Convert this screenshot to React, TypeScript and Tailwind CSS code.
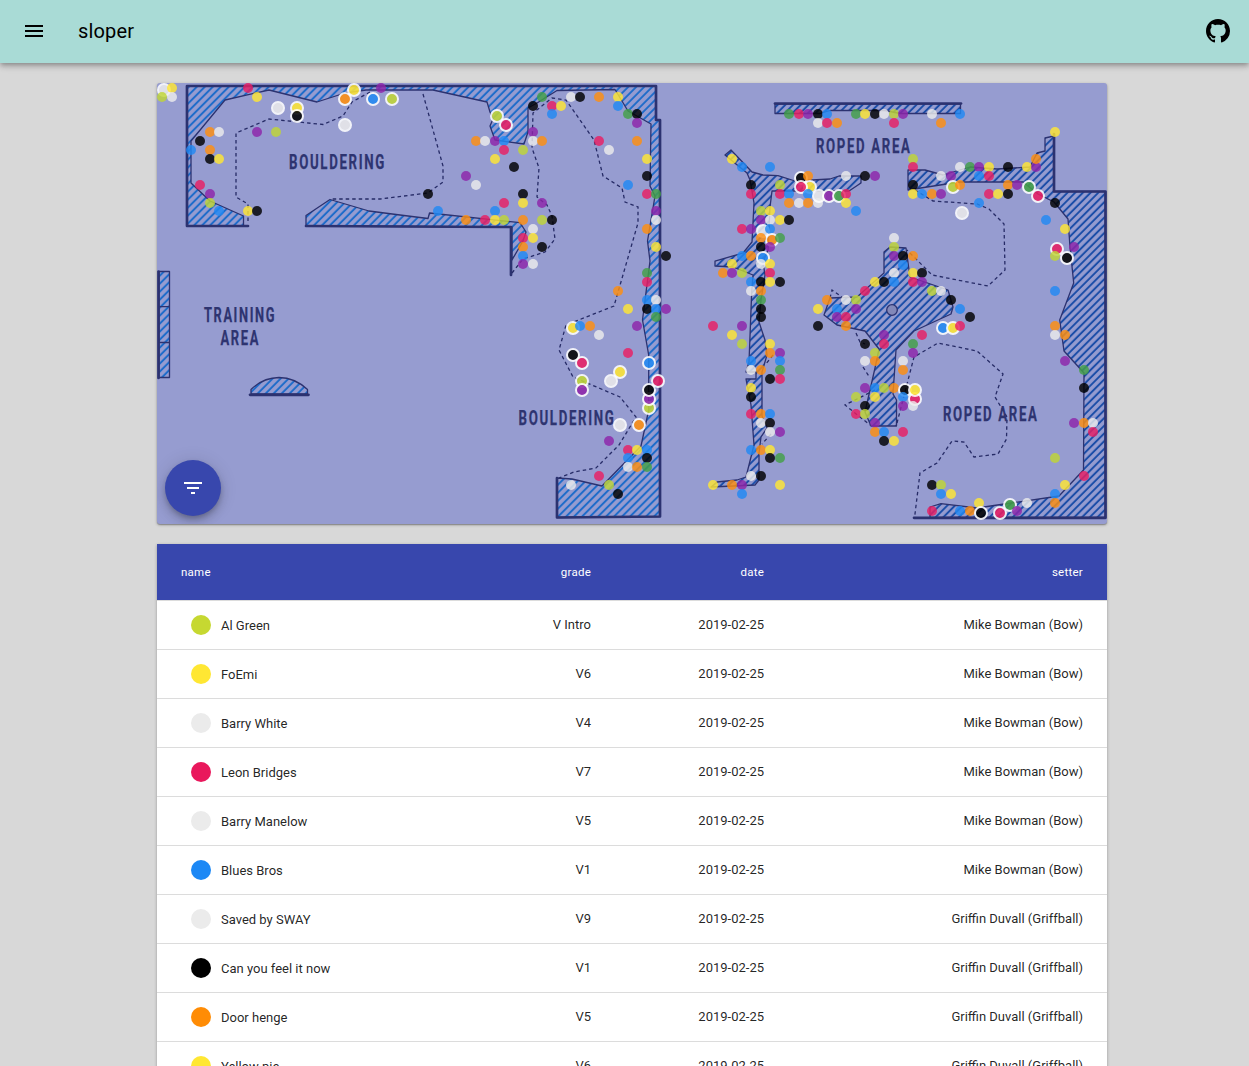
import React from "react";

const COLORS: Record<string, string> = {
  r: "#e91e63",
  p: "#8e24aa",
  b: "#2189f3",
  g: "#43a047",
  l: "#c0d636",
  y: "#ffe633",
  o: "#ff8f0f",
  k: "#000000",
  w: "#ebebeb",
};

// Each entry is a colour key followed by its x,y position; capitals are selected routes.
const DOTS = `
W164,90 y172,88 l162,97 w172,97 r248,88 y257,97 p381,88 W278,108 Y297,108 K297,116 O345,99 Y354,90 B373,99 L392,99 W345,125
o210,132 w219,132 k200,141 b191,150 o210,150 k210,159 y219,159 p257,132 l276,132 r200,185 p210,194 l210,203 b219,211 y248,211 k257,211
g542,97 k533,106 r552,106 y561,106 b552,114 w571,97 k580,97 o599,97 y618,97 b618,106 g628,114 k637,114 p637,123 L497,116 R506,125
o476,141 w485,141 p495,141 b504,141 r504,150 y495,159 l523,150 k514,167 p533,132 w533,141 o542,141 p466,176 w476,185 k428,194 b438,211
r599,141 w609,150 o637,141 y647,159 k647,176 b628,185 r647,194 g656,194 p656,211 w656,220 o647,229 y656,247 k666,256 g647,273 r647,282 o618,291
k523,194 y523,203 r504,203 b495,211 p542,203 o466,220 r485,220 y495,220 l504,220 o523,220 l542,220 k552,220 w533,229 r523,238 y533,238
o523,247 k542,247 b523,256 p523,264 w533,264
b647,300 w656,300 k647,309 b656,309 p666,309 g656,317 y628,309 p637,326 Y573,328 b580,326 o590,326 w599,335 K573,355 R582,363 r628,353
B649,363 W611,381 Y620,372 R658,381 L582,381 P582,390 L649,408 P649,399 K649,390 W620,425 O639,425 p609,441
r628,450 y637,450 b647,450 b628,458 k647,458 w628,467 o637,467 g647,467 r599,476 w571,485 l609,485 k618,494
g789,114 r799,114 p808,114 k818,114 b827,114 g856,114 y865,114 k875,114 w884,114 l894,114 p903,114 w932,114 b960,114
w818,123 r827,123 o837,123 r894,123 o941,123 y732,159 b742,167 b770,167 k751,185 r751,194 l780,185 r780,194 b789,194
K801,178 o808,176 Y810,187 R801,187 w846,176 k865,176 p875,176 b808,194 o789,203 w799,203 o808,203 w818,203 W819,196 P829,196 G839,196 r846,194 y846,203 b856,211
l761,211 y770,211 p761,220 w770,220 y780,220 k789,220 r742,229 p751,229 W763,231 b770,229 O772,240 o761,238 g780,238 k761,247 p770,247
b742,256 o751,256 B763,258 w761,264 y732,264 y770,264 o723,273 p732,273 l742,273 r770,273 b751,282 k761,282 y770,282 k780,282 w751,291 o761,291 g761,300
k761,309 k761,317 r713,326 p742,326 y732,335 l742,344 y770,344 o770,353 p780,353 b751,361 b780,361 w751,370 o761,370 g780,370 k770,379 r780,379
y751,388 k751,397 r751,414 o761,414 b770,414 w761,423 k770,423 w770,432 p780,432 b751,450 o761,450 y770,450 k770,458 g780,458 w751,476 k761,476
y713,485 o732,485 p742,485 y780,485 b742,494
o827,300 y818,309 k818,326 b837,309 w846,300 l856,300 p856,309 p837,317 r846,317 o846,326 r865,291 k865,344 p884,335 r884,344 l875,353
w865,361 o875,361 p865,388 b875,388 l884,388 l856,397 y875,397 k865,406 r856,414 l865,414 p875,423 o875,432 b884,432 k884,441 y894,441
y1055,132 l913,159 r913,167 w941,176 p951,176 w960,167 g970,167 p979,167 y989,167 k1008,167 y1027,167 p1036,167 o1036,159 b979,176 r989,176
k913,185 y913,194 b922,194 o932,194 p941,194 L953,187 o960,185 o1008,185 p1017,185 G1029,187 R1038,196 r989,194 y998,194 k1008,194 b979,203 W962,213
k1055,203 b1046,220 y1065,229 p1074,247 R1057,249 l1055,256 K1067,258 b1055,291
w894,238 l894,247 p894,256 k903,256 o913,256 b903,265 w894,273 y913,273 k922,273 y875,282 k884,282 b894,282 r913,282 p922,282 l932,291 w941,291 k951,300
b960,309 k970,317 B943,328 Y953,328 r960,326 r922,335 g913,344 p913,353 w903,361 o903,370 o894,388 K905,390 R915,399 Y915,390 b903,397 p903,406 w913,406 r903,432
o1055,326 w1055,335 o1065,335 p1065,361 g1084,370 k1084,388 p1074,423 o1084,423 w1093,423 r1093,432 l1055,458 r1084,476 y1065,485 b1055,494 o1055,503
k932,485 l941,485 b941,494 y951,494 r932,511 b960,511 o970,511 y979,503 K981,513 R1000,513 G1010,505 p1017,511 w1027,503
`
  .trim()
  .split(/\s+/)
  .map((entry) => {
    const [x, y] = entry.slice(1).split(",").map(Number);
    const key = entry[0].toLowerCase();
    return { x, y, color: COLORS[key], selected: entry[0] !== key };
  });

const DASHED = [
  "M370 92L352 102L343 116L323 124.5L269 119L236 133V197L248 204V222",
  "M423 94L443 166V182L428 193L380 199H330",
  "M512 273L523 259L545 252L555 239L552 216L547 205L537 197L539 168L532 148L533 113L552 98L566 100L594 140L603 176L622 188L625 202L638 207V223L614 306L566 325L559 350L573 377L620 397L636 417L619 445L596 468L574 472L559 478",
  "M915 190L933 201L977 204L989 209L1004 224L1005 270L988 286L932 275L907 250",
  "M897 423L914 357L938 343L977 351L1003 374L995 397L1007 417L1006.5 439L998 454L974 457L964 442L952 441L937 463L920 473L914.5 518",
  "M830 298L832 290L842 297",
  "M856 333L860 342L865 344M863 367L870 378M875 390L845 405L870 425",
  "M773 355L765 365M771 434L762 444",
];

const LIGHT_WALLS = [
  "M187 86V226H243.500V216L210 201L191 183V141L225 100L269 90L317 102L345 93L366 90H433L487 102L490 112L493 119L490 126L495 140L524 144L528 132V108L537 103L557 90.500L615 89.500L628 111L651 124L650 186L655 196L647.500 241L650 261L642.500 320L648.700 355V410L641 446L602 486L572 479L557 478V517.500L660 516.500V120H656V86Z",
  "M306 226V215.500L330 199.500L369 211L400 215L428 218.500L429.500 213L520 222.700L526 232L523 241L512 260V227Z",
  "M159 271.500H169.500V377.500H159ZM159 306.700H169.500M159 342.500H169.500",
  "M251 394V389.500Q263 377.700 279 377.500Q295 377.700 307.500 389.500V394Z",
];

const DARK_WALLS = [
  "M775 104V113.500H820L830 110.500H885L900 113.500H960.500V104Z",
  "M725 155L731 150L752 172L763 175L778 175.700L795 181L830 179L839 176H861V183L849 191H772L770 207L768 250L763 262L765 275L761 300L759 322L765 340L767 355L762 372V416L767 428L761 437L759 453V480L755 485L711 487L717 482L737 480L746 477L754 445L751 405L746 379H756V372H746L749 362L751.700 292L753 275L733 267L715 266V261L743 253L752 242L754 203L750 180L747 173Z",
  "M884 273V252L890 247L906 248L910 277L948 290L953 307L951 314L914 331L896 350L893 394L896.500 400V426H871L865 412L875 368L879 349L865 331L837 325L824 315L830 298L857 297Z",
  "M908 190V170H925L943 175L970 167L997 169L1030 167L1037 153L1045 151V138L1054 136V191.500H1105.500V517.500H930V507L941 503.700L977 508L1059 496L1083.500 470L1084 373L1064 351L1059.700 320L1073.700 283L1070 247L1068 219L1054 202L1038 194L1023 182H960L940 185Z",
];

const THICK = [
  "M248 226H187V86H656V120H660V516.500L557 517.500V478",
  "M306 226L511 227V275",
  "M158.500 271.500V378",
  "M250 394.800H308.500",
  "M775 103.500H961",
  "M1054 134V191.500H1105.500V517.800H914",
];

function MapLabel({ x, y, width, children }: { x: number; y: number; width: number; children: string }) {
  return (
    <text
      x={x}
      y={y}
      textLength={width}
      lengthAdjust="spacingAndGlyphs"
      className="fill-[#2e3470] stroke-[#2e3470] stroke-[0.25px] text-[20px] font-bold tracking-[2.5px]"
    >
      {children}
    </text>
  );
}

function GymMap() {
  return (
    <svg viewBox="157 83 950 441" className="block h-full w-full">
      <defs>
        <pattern id="lightHatch" width="5.650" height="5.650" patternUnits="userSpaceOnUse" patternTransform="rotate(45)">
          <path d="M2.800 -1V7" stroke="#1f6cca" strokeWidth="2" />
        </pattern>
        <pattern id="darkHatch" width="5.450" height="5.450" patternUnits="userSpaceOnUse" patternTransform="rotate(45)">
          <path d="M2.700 -1V7" stroke="#1b4da8" strokeWidth="2" />
        </pattern>
      </defs>
      <g stroke="#2c3270" strokeWidth="1.300" strokeLinejoin="round">
        {LIGHT_WALLS.map((d) => (
          <path key={d} d={d} fill="url(#lightHatch)" />
        ))}
        {DARK_WALLS.map((d) => (
          <path key={d} d={d} fill="url(#darkHatch)" />
        ))}
        <circle cx="892" cy="310" r="5.300" fill="#8288b9" />
      </g>
      <g fill="none" stroke="#2c3270" strokeWidth="2.700" strokeLinecap="round" strokeLinejoin="round">
        {THICK.map((d) => (
          <path key={d} d={d} />
        ))}
      </g>
      <g fill="none" stroke="#262b66" strokeWidth="1.300" strokeDasharray="3.500 3">
        {DASHED.map((d) => (
          <path key={d} d={d} />
        ))}
      </g>
      <MapLabel x={289} y={169.300} width={97}>BOULDERING</MapLabel>
      <MapLabel x={518.500} y={425.300} width={97}>BOULDERING</MapLabel>
      <MapLabel x={204} y={322.300} width={72}>TRAINING</MapLabel>
      <MapLabel x={220.500} y={345.300} width={39.500}>AREA</MapLabel>
      <MapLabel x={816} y={152.800} width={95.500}>ROPED AREA</MapLabel>
      <MapLabel x={943} y={421.300} width={95.500}>ROPED AREA</MapLabel>
      {DOTS.map(({ x, y, color, selected }, i) => (
        <circle
          key={i}
          cx={x}
          cy={y}
          r={selected ? 6 : 5}
          fill={color}
          opacity={selected ? 0.87 : 0.82}
          stroke={selected ? "#ffffff" : "none"}
          strokeWidth="2"
        />
      ))}
    </svg>
  );
}

const ROWS = [
  ["#c6d831", "Al Green", "V Intro", "Mike Bowman (Bow)"],
  ["#ffe733", "FoEmi", "V6", "Mike Bowman (Bow)"],
  ["#ebebeb", "Barry White", "V4", "Mike Bowman (Bow)"],
  ["#e9185c", "Leon Bridges", "V7", "Mike Bowman (Bow)"],
  ["#ebebeb", "Barry Manelow", "V5", "Mike Bowman (Bow)"],
  ["#1c88f5", "Blues Bros", "V1", "Mike Bowman (Bow)"],
  ["#ebebeb", "Saved by SWAY", "V9", "Griffin Duvall (Griffball)"],
  ["#000000", "Can you feel it now", "V1", "Griffin Duvall (Griffball)"],
  ["#ff8c05", "Door henge", "V5", "Griffin Duvall (Griffball)"],
  ["#ffe733", "Yellow pie", "V6", "Griffin Duvall (Griffball)"],
];

export default function App() {
  return (
    <div className="h-screen overflow-hidden bg-[#d8d8d8] font-[Roboto,sans-serif]">
      <header className="relative flex h-[63px] items-center bg-[#a9dbd6] px-[22px] pb-0.5 shadow-[0_2px_4px_-1px_rgba(0,0,0,0.2),0_4px_5px_rgba(0,0,0,0.14),0_1px_10px_rgba(0,0,0,0.12)]">
        <button aria-label="Menu">
          <svg viewBox="0 0 24 24" className="size-6">
            <path d="M3 18h18v-2H3v2zm0-5h18v-2H3v2zm0-7v2h18V6H3z" />
          </svg>
        </button>
        <h1 className="ml-8 grow text-[20px] leading-8 tracking-[0.15px] text-black">sloper</h1>
        <svg viewBox="0 0 16 16" className="-mr-[3px] size-6">
          <path d="M8 0C3.58 0 0 3.58 0 8c0 3.540 2.290 6.530 5.470 7.590.4.070.55-.17.55-.38 0-.19-.01-.82-.01-1.490-2.010.37-2.530-.49-2.690-.94-.09-.23-.48-.94-.82-1.130-.28-.15-.68-.52-.01-.53.63-.01 1.080.58 1.230.82.72 1.210 1.870.87 2.330.66.070-.52.28-.87.51-1.070-1.780-.2-3.640-.89-3.640-3.950 0-.87.31-1.590.82-2.150-.08-.2-.36-1.020.08-2.120 0 0 .67-.21 2.200.82.64-.18 1.320-.27 2-.27s1.360.09 2 .27c1.530-1.040 2.200-.82 2.200-.82.44 1.100.16 1.920.08 2.120.51.56.82 1.270.82 2.150 0 3.070-1.870 3.750-3.650 3.950.29.25.54.73.54 1.480 0 1.070-.01 1.930-.01 2.200 0 .21.15.46.55.38A8.010 8.010 0 0 0 16 8c0-4.420-3.580-8-8-8z" />
        </svg>
      </header>
      <main className="mt-5 ml-[157px] flex w-[950px] flex-col gap-5">
        <section className="relative h-[441px] overflow-hidden rounded-[3px] bg-[#969cd0] shadow-[0_1px_3px_rgba(0,0,0,0.3),0_1px_1px_rgba(0,0,0,0.2)]">
          <GymMap />
          <button aria-label="Filter" className="absolute bottom-2 left-2 flex size-14 items-center justify-center rounded-full bg-[#3847ad] shadow-[0_3px_5px_-1px_rgba(0,0,0,0.2),0_6px_10px_rgba(0,0,0,0.14),0_1px_18px_rgba(0,0,0,0.12)]">
            <svg viewBox="0 0 24 24" className="size-6 fill-white">
              <path d="M10 18h4v-2h-4v2zM3 6v2h18V6H3zm3 7h12v-2H6v2z" />
            </svg>
          </button>
        </section>
        <section className="bg-white text-[13px] text-black/87 shadow-[0_1px_3px_rgba(0,0,0,0.3)]">
          <div className="flex h-[57px] items-center border-b border-[#dcdcdc] bg-[#3847ad] px-6 pt-0.5 text-[11.5px] tracking-[0.25px] text-white">
            <div className="w-[250px]">name</div>
            <div className="w-[160px] text-right">grade</div>
            <div className="w-[173px] text-right">date</div>
            <div className="grow text-right">setter</div>
          </div>
          {ROWS.map(([color, name, grade, setter]) => (
            <div key={name} className="flex h-[49px] items-center border-b border-[#dcdcdc] px-6">
              <div className="flex w-[250px] items-center gap-2.5 pl-2.5">
                <span className="size-5 rounded-full" style={{ backgroundColor: color }} />
                <span className="pt-0.5">{name}</span>
              </div>
              <div className="w-[160px] text-right">{grade}</div>
              <div className="w-[173px] text-right">2019-02-25</div>
              <div className="grow text-right">{setter}</div>
            </div>
          ))}
        </section>
      </main>
    </div>
  );
}
